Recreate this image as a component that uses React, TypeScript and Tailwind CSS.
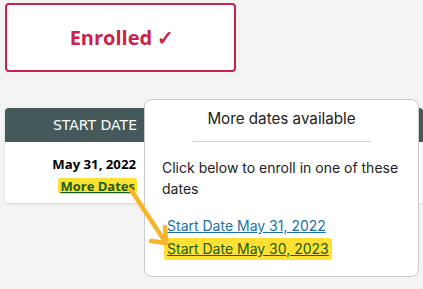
import React from "react";

export default function App() {
  return (
    <div className="relative w-[423px] h-[289px] overflow-hidden bg-[#f4f4f4]" style={{ fontFamily: "Inter, 'Noto Sans', sans-serif" }}>
      <div className="pl-[5px] pt-[3px]">
        <div className="w-[231px] h-[69px] border-2 border-[#c9224b] rounded-[4px] bg-white flex items-center justify-center">
          <span className="text-[#c9224b] font-bold text-[20px] pl-[3px]" style={{ fontFamily: "'Open Sans', sans-serif" }}>
            Enrolled ✓
          </span>
        </div>
        <div className="mt-[36px] w-[418px] rounded-[4px] overflow-hidden shadow-[0_1px_3px_rgba(0,0,0,0.12)]">
          <div className="h-[34px] bg-[#44595a] flex items-center">
            <div className="w-[140px] pr-[8px] text-right text-white text-[14px]" style={{ fontFamily: "'DejaVu Sans', sans-serif" }}>START DATE</div>
          </div>
          <div className="h-[61px] bg-white flex" style={{ fontFamily: "'Open Sans', sans-serif" }}>
            <div className="w-[140px] pr-[9px] flex flex-col items-end pt-[12px]">
              <div className="text-[13.2px] font-bold text-black leading-[20px]">May 31, 2022</div>
              <div className="mt-[4px] mr-[-1px] bg-[#ffe033] rounded-[3px] px-[2px] leading-[15px]">
                <span className="text-[13px] font-bold text-[#175e17] underline">More Dates</span>
              </div>
            </div>
          </div>
        </div>
      </div>

      <div className="absolute left-[144px] top-[99px] w-[275px] h-[178px] bg-white border border-[#cccccc] rounded-[8px] text-[#222]">
        <div className="pt-[8px] text-center text-[15.2px] leading-[22px]">More dates available</div>
        <div className="mx-auto mt-[11px] w-[178px] h-px bg-[#d0d0d0]" />
        <div className="mt-[15px] pl-[17px] pr-[8px] text-[14px] leading-[21px]">
          Click below to enroll in one of these dates
        </div>
        <div className="mt-[16px] pl-[22px] flex flex-col items-start gap-[1px] text-[14px] leading-[22px]">
          <span className="text-[#1b70a6] underline">Start Date May 31, 2022</span>
          <span className="-ml-[3px] px-[3px] bg-[#ffe033] rounded-[3px] text-[#175e17] underline">Start Date May 30, 2023</span>
        </div>
      </div>

      <svg className="absolute left-0 top-0" width="423" height="289" viewBox="0 0 423 289" fill="none">
        <path d="M131 190 L166 243" stroke="#f8b52a" strokeWidth="4.5" strokeLinecap="round" />
        <path d="M151 241 L166 243 L165 227" stroke="#f8b52a" strokeWidth="4.5" strokeLinecap="round" strokeLinejoin="round" />
      </svg>
    </div>
  );
}
